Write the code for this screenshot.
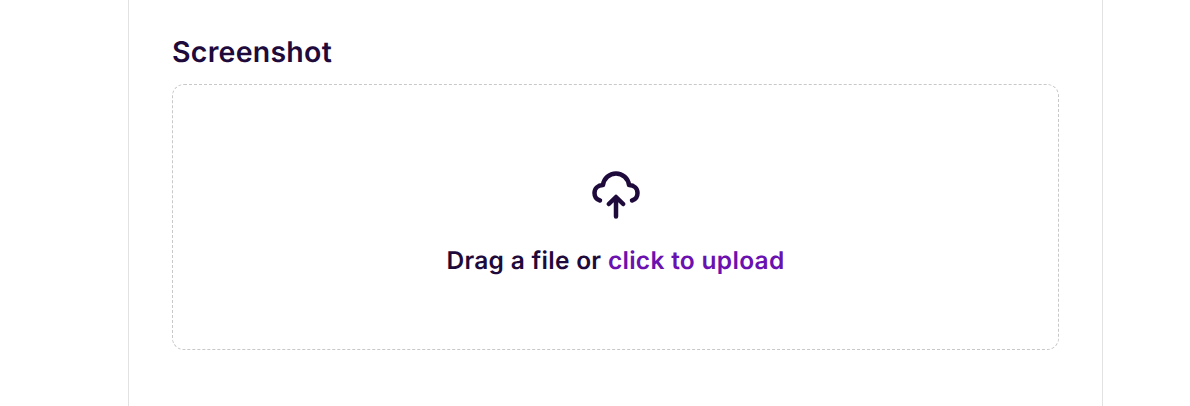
<style>
:global(body) { margin: 0; background: #fff; }
.panel {
  box-sizing: border-box;
  width: 975px;
  height: 406px;
  margin-left: 128px;
  padding: 34px 43px 0;
  border-left: 1px solid #e2e2e2;
  border-right: 1px solid #e2e2e2;
  font-family: Inter, sans-serif;
  font-optical-sizing: none;
  text-rendering: geometricPrecision;
  overflow: hidden;
}
h2 {
  margin: 0 0 14px;
  font-size: 28.5px;
  line-height: 36px;
  font-weight: 600;
  letter-spacing: 0.25px;
  color: #1f0a3c;
}
.drop {
  box-sizing: border-box;
  width: 887px;
  height: 266px;
  padding-top: 12px;
  border: 1px dashed #c8c8c8;
  border-radius: 12px;
  display: flex;
  flex-direction: column;
  align-items: center;
  justify-content: center;
  gap: 25px;
}
svg { display: block; width: 48px; height: 48px; }
p {
  margin: 0;
  font-size: 24.5px;
  line-height: 32px;
  font-weight: 600;
  letter-spacing: 0.3px;
  color: #1f0a3c;
}
span { color: #6a11b0; }
</style>

<div class="panel">
  <h2>Screenshot</h2>
  <div class="drop">
    <svg viewBox="0 0 48 48" fill="none" stroke="#1f0a3c" stroke-width="4.5" stroke-linecap="round" stroke-linejoin="round">
      <path d="M8 29.500C4.500 28.500 2.500 25.500 2.500 22C2.500 17.500 6 14.200 11 14A13.100 13.100 0 0 1 37 14C42 14.200 45.500 17.500 45.500 22C45.500 25.500 43.500 28.500 40 29.500" />
      <path d="M24 45.500V27M16.800 33L24 26L31.200 33" />
    </svg>
    <p>Drag a file or <span>click to upload</span></p>
  </div>
</div>
